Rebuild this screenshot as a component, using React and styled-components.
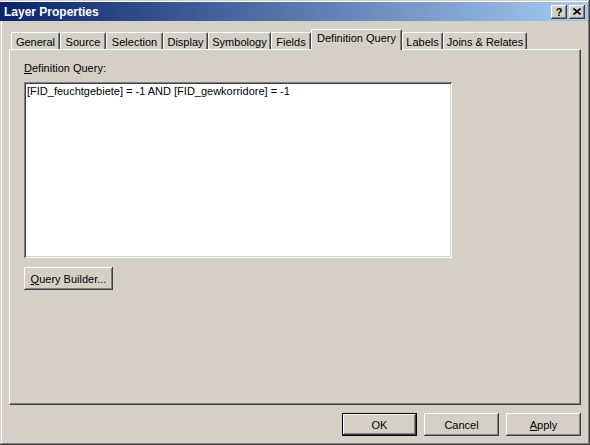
import React from 'react'
import styled, { createGlobalStyle } from 'styled-components'

const Global = createGlobalStyle`
  html, body { margin: 0; padding: 0; background: #d4d0c8; }
  body { font-family: "Liberation Sans", Arial, sans-serif; font-size: 11px; color: #000; }
`

const Window = styled.div`
  width: 590px;
  height: 445px;
  box-sizing: border-box;
  padding: 2px 2px 2px 2px;
  background: #d4d0c8;
  display: flex;
  flex-direction: column;
  box-shadow: inset -1px -1px 0 #404040, inset 1px 1px 0 #d4d0c8,
    inset -2px -2px 0 #808080, inset 2px 2px 0 #fff;
`

const TitleBar = styled.div`
  height: 19px;
  margin-left: -2px;
  display: flex;
  align-items: center;
  padding: 0 3px 0 4px;
  background: linear-gradient(to right, #0a246a, #a6caf0);
  color: #fff;
  font-weight: bold;
  font-size: 12px;
`

const Title = styled.div`
  flex: 1;
`

const CaptionButtons = styled.div`
  display: flex;
  gap: 2px;
`

const CaptionButton = styled.div`
  width: 16px;
  height: 14px;
  box-sizing: border-box;
  background: #d4d0c8;
  color: #000;
  display: flex;
  align-items: center;
  justify-content: center;
  font-size: 11px;
  font-weight: bold;
  box-shadow: inset -1px -1px 0 #404040, inset 1px 1px 0 #fff,
    inset -2px -2px 0 #808080, inset 2px 2px 0 #d4d0c8;
`

const TabRow = styled.div`
  display: flex;
  align-items: flex-end;
  height: 20px;
  margin-top: 8px;
  padding-left: 9px;
  position: relative;
  z-index: 1;
`

const Tab = styled.div`
  width: ${p => p.$w}px;
  height: ${p => (p.$active ? 21 : 17)}px;
  box-sizing: border-box;
  margin-bottom: ${p => (p.$active ? -1 : 0)}px;
  padding-top: ${p => (p.$active ? 2 : 3)}px;
  text-align: center;
  background: #d4d0c8;
  border-top: 1px solid #fff;
  border-left: 1px solid #fff;
  border-right: 1px solid #404040;
  border-radius: 2px 2px 0 0;
  box-shadow: inset -1px 0 0 #808080;
  white-space: nowrap;
`

const Panel = styled.div`
  width: 572px;
  height: 356px;
  margin-left: 7px;
  box-sizing: border-box;
  border-top: 1px solid #fff;
  border-left: 1px solid #fff;
  border-right: 1px solid #404040;
  border-bottom: 1px solid #404040;
  box-shadow: inset -1px -1px 0 #808080;
  padding: 12px 0 0 14px;
  display: flex;
  flex-direction: column;
  align-items: flex-start;
`

const Label = styled.div`
  line-height: 13px;
  u { text-decoration: underline; }
`

const QueryBox = styled.div`
  width: 428px;
  height: 176px;
  margin-top: 7px;
  box-sizing: border-box;
  background: #fff;
  padding: 3px 3px;
  line-height: 13px;
  box-shadow: inset 1px 1px 0 #808080, inset -1px -1px 0 #fff,
    inset 2px 2px 0 #404040, inset -2px -2px 0 #d4d0c8;
`

const Button = styled.div`
  width: ${p => p.$w}px;
  height: 23px;
  box-sizing: border-box;
  display: flex;
  align-items: center;
  justify-content: center;
  background: #d4d0c8;
  box-shadow: ${p =>
    p.$default
      ? 'inset 0 0 0 1px #000, inset -2px -2px 0 #404040, inset 2px 2px 0 #fff, inset -3px -3px 0 #808080'
      : 'inset -1px -1px 0 #404040, inset 1px 1px 0 #fff, inset -2px -2px 0 #808080, inset 2px 2px 0 #d4d0c8'};
`

const BuilderButton = styled(Button)`
  margin-top: 9px;
`

const Footer = styled.div`
  display: flex;
  justify-content: flex-end;
  gap: 7px;
  margin-top: 8px;
  padding-right: 7px;
`

const tabs = [
  ['General', 49],
  ['Source', 46],
  ['Selection', 57],
  ['Display', 45],
  ['Symbology', 63],
  ['Fields', 40],
  ['Definition Query', 91, true],
  ['Labels', 41],
  ['Joins & Relates', 84],
]

export default function App() {
  return (
    <>
      <Global />
      <Window>
        <TitleBar>
          <Title>Layer Properties</Title>
          <CaptionButtons>
            <CaptionButton>?</CaptionButton>
            <CaptionButton>
              <svg width="8" height="7" viewBox="0 0 8 7">
                <path d="M0.5 0.5 L7.5 6.5 M7.5 0.5 L0.5 6.5" stroke="#000" strokeWidth="1.6" />
              </svg>
            </CaptionButton>
          </CaptionButtons>
        </TitleBar>
        <TabRow>
          {tabs.map(([name, w, active]) => (
            <Tab key={name} $w={w} $active={active}>{name}</Tab>
          ))}
        </TabRow>
        <Panel>
          <Label><u>D</u>efinition Query:</Label>
          <QueryBox>[FID_feuchtgebiete] = -1 AND [FID_gewkorridore] = -1</QueryBox>
          <BuilderButton $w={89}><span><u>Q</u>uery Builder...</span></BuilderButton>
        </Panel>
        <Footer>
          <Button $w={75} $default>OK</Button>
          <Button $w={75}>Cancel</Button>
          <Button $w={75}><span><u>A</u>pply</span></Button>
        </Footer>
      </Window>
    </>
  )
}
